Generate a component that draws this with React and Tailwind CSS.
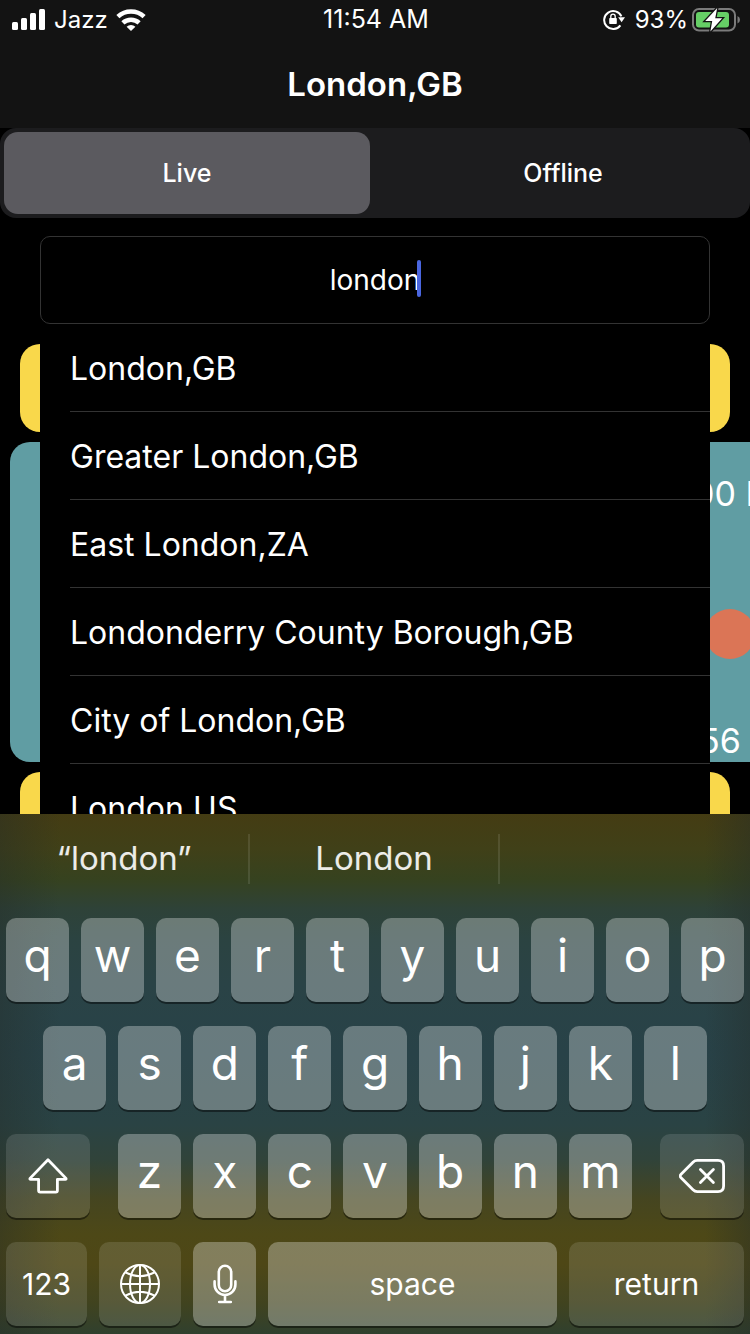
import React, { useState } from "react";

const CITIES = [
  "London,GB",
  "Greater London,GB",
  "East London,ZA",
  "Londonderry County Borough,GB",
  "City of London,GB",
  "London,US",
];

function SignalIcon() {
  return (
    <svg width="34" height="22" viewBox="0 0 34 22" fill="#fff" aria-hidden="true">
      <rect x="0" y="13" width="6" height="8" rx="1.5" />
      <rect x="9" y="9" width="6" height="12" rx="1.5" />
      <rect x="18" y="4" width="6" height="17" rx="1.5" />
      <rect x="27" y="0" width="6" height="21" rx="1.5" />
    </svg>
  );
}

function WifiIcon() {
  return (
    <svg width="30" height="22" viewBox="0 0 30 22" fill="none" stroke="#fff" strokeWidth="4.6" aria-hidden="true">
      <path d="M1.9 7.6A19.5 19.5 0 0 1 28.1 7.6" />
      <path d="M6.9 13.9A12 12 0 0 1 23.1 13.9" />
      <path d="M15 22L10.6 17.8A6.4 6.4 0 0 1 19.4 17.8Z" fill="#fff" stroke="none" />
    </svg>
  );
}

function RotationLockIcon() {
  return (
    <svg width="22" height="22" viewBox="0 0 22 22" fill="none" aria-hidden="true">
      <path d="M18.4 7.4A9 9 0 1 0 17.4 16.4" stroke="#fff" strokeWidth="2" />
      <path d="M15.2 8.2H22L18.6 13.2Z" fill="#fff" />
      <rect x="6.2" y="9" width="7.6" height="6" rx="0.8" fill="#fff" />
      <path d="M7.8 9.4V7.4A2.2 2.2 0 0 1 12.2 7.4V9.4" stroke="#fff" strokeWidth="1.3" />
    </svg>
  );
}

function BatteryIcon() {
  return (
    <svg width="48" height="24" viewBox="0 0 48 24" fill="none" aria-hidden="true">
      <rect x="1" y="1" width="42" height="21.5" rx="6" stroke="#7b7b7b" strokeWidth="2" />
      <path d="M45.5 8Q48 9 48 11.7T45.5 15.5Z" fill="#7b7b7b" />
      <rect x="4" y="4" width="33" height="15.5" rx="3" fill="#66cf66" />
      <path d="M25.2 0L13.2 13H20.2L18.4 23.6L30.2 10.2H23.2Z" fill="#fff" stroke="#131313" strokeWidth="2.6" paintOrder="stroke" />
    </svg>
  );
}

function ShiftIcon() {
  return (
    <svg width="40" height="36" viewBox="0 0 40 36" fill="none" stroke="#fff" strokeWidth="2.8" strokeLinejoin="round" aria-hidden="true">
      <path d="M20 1.8L38 20.4Q38.4 21.4 37.4 21.4H29.4V32.6Q29.4 34.2 27.8 34.2H12.2Q10.6 34.2 10.6 32.6V21.4H2.6Q1.6 21.4 2 20.4Z" />
    </svg>
  );
}

function DeleteIcon() {
  return (
    <svg width="46" height="34" viewBox="0 0 46 34" fill="none" stroke="#fff" strokeWidth="2.8" strokeLinejoin="round" strokeLinecap="round" aria-hidden="true">
      <path d="M1.8 15.6L14 3.2Q15.8 1.4 18.2 1.4H39Q44.6 1.4 44.6 7V27Q44.6 32.6 39 32.6H18.2Q15.8 32.6 14 30.8L1.8 18.4Q.6 17 1.8 15.6Z" />
      <path d="M21.4 10.4L34.4 23.6M34.4 10.4L21.4 23.6" />
    </svg>
  );
}

function GlobeIcon() {
  return (
    <svg width="40" height="40" viewBox="0 0 40 40" fill="none" stroke="#fff" strokeWidth="2" aria-hidden="true">
      <circle cx="20" cy="20" r="19" />
      <ellipse cx="20" cy="20" rx="10" ry="19" />
      <path d="M20 1V39M1 20H39M5.4 8.4Q20 16 34.6 8.4M5.4 31.6Q20 24 34.6 31.6" />
    </svg>
  );
}

function MicIcon() {
  return (
    <svg width="24" height="40" viewBox="0 0 24 40" fill="none" stroke="#fff" strokeWidth="2.6" strokeLinecap="round" aria-hidden="true">
      <rect x="5.8" y="1.8" width="12.4" height="25.4" rx="6.2" />
      <path d="M1.6 17.4V20.6A10.4 10.4 0 0 0 22.4 20.6V17.4M12 31V38M6.2 38H17.8" />
    </svg>
  );
}

const KEY = "flex h-[84px] min-w-0 items-center justify-center rounded-[10px] shadow-[0_2px_0_rgba(0,0,0,0.45)]";

function LetterKey({ letter }) {
  return (
    <button type="button" className={`${KEY} bg-white/30 pb-2.5 text-[46px] leading-none`}>
      {letter}
    </button>
  );
}

function LightKey({ label, children }) {
  return (
    <button type="button" aria-label={label} className={`${KEY} bg-white/30 text-[30px]`}>
      {children}
    </button>
  );
}

function DarkKey({ label, children }) {
  return (
    <button type="button" aria-label={label} className={`${KEY} bg-white/12 text-[30px]`}>
      {children}
    </button>
  );
}

function StatusBar() {
  return (
    <div className="grid h-10 grid-cols-3 items-center pr-2.5 pl-3 text-2xl text-white">
      <div className="flex items-center gap-2">
        <SignalIcon />
        <span>Jazz</span>
        <WifiIcon />
      </div>
      <time className="text-center text-[25px]">11:54 AM</time>
      <div className="flex items-center justify-end gap-1">
        <span className="mr-1.5"><RotationLockIcon /></span>
        <span>93%</span>
        <BatteryIcon />
      </div>
    </div>
  );
}

function Segment({ selected, onClick, children }) {
  return (
    <button
      type="button"
      aria-pressed={selected}
      onClick={onClick}
      className={`rounded-[14px] pt-0.5 text-[25px] font-medium ${selected ? "bg-[#5b5a5f]" : "bg-transparent"}`}
    >
      {children}
    </button>
  );
}

function ForecastCards() {
  return (
    <div className="flex flex-col gap-2.5 pt-5">
      <div className="mx-5 h-[88px] shrink-0 rounded-[20px] bg-[#f9d84b]" />
      <div className="ml-2.5 flex h-80 shrink-0 justify-end overflow-hidden rounded-l-[20px] bg-[#609da3]">
        <div className="flex w-[57px] flex-col pt-8 text-[34px] leading-10 whitespace-nowrap">
          <span>00 PM</span>
          <span className="mt-[95px] ml-3 size-[50px] rounded-full bg-[#db7556]" />
          <span className="mt-[62px] ml-1.5">56</span>
        </div>
      </div>
      <div className="mx-5 h-[88px] shrink-0 rounded-[20px] bg-[#f9d84b]" />
    </div>
  );
}

function Keyboard() {
  return (
    <section
      aria-label="Keyboard"
      className="relative z-20 shrink-0 bg-[linear-gradient(90deg,rgba(36,44,40,0.4)_0%,rgba(36,44,40,0)_8%,rgba(36,44,40,0)_94%,rgba(36,44,40,0.4)_100%),linear-gradient(180deg,#443c13_0px,#404018_35px,#36421f_65px,#2e4238_95px,#2b4341_125px,#2a4346_170px,#284248_240px,#2a4344_310px,#30433a_345px,#454520_385px,#4d4817_420px,#4e4716_450px,#40431f_490px,#30402e_520px)] text-white"
    >
      <div className="grid h-[104px] grid-cols-3 pt-5 pb-9 text-[33px] text-white/90">
        <button type="button" className="border-r-2 border-white/10">“london”</button>
        <button type="button" className="border-r-2 border-white/10">London</button>
        <span />
      </div>
      <div className="flex flex-col gap-6 px-1.5 pb-2">
        <div className="grid grid-cols-10 gap-3">
          {[..."qwertyuiop"].map((l) => <LetterKey key={l} letter={l} />)}
        </div>
        <div className="grid grid-cols-9 gap-3 px-[37px]">
          {[..."asdfghjkl"].map((l) => <LetterKey key={l} letter={l} />)}
        </div>
        <div className="grid grid-cols-[84fr_514fr_84fr] gap-7">
          <DarkKey label="Shift"><ShiftIcon /></DarkKey>
          <div className="grid grid-cols-7 gap-3">
            {[..."zxcvbnm"].map((l) => <LetterKey key={l} letter={l} />)}
          </div>
          <DarkKey label="Delete"><DeleteIcon /></DarkKey>
        </div>
        <div className="grid grid-cols-[81fr_82fr_63fr_289fr_175fr] gap-3">
          <DarkKey>123</DarkKey>
          <DarkKey label="Next keyboard"><GlobeIcon /></DarkKey>
          <LightKey label="Dictate"><MicIcon /></LightKey>
          <LightKey>space</LightKey>
          <DarkKey>return</DarkKey>
        </div>
      </div>
    </section>
  );
}

export default function App() {
  const [mode, setMode] = useState("Live");
  const [query, setQuery] = useState("london");
  return (
    <div className="flex h-screen flex-col overflow-hidden bg-black font-['Inter',sans-serif] text-white">
      <header className="shrink-0 bg-[#131313]">
        <StatusBar />
        <h1 className="flex h-[88px] items-center justify-center pt-0.5 text-[33px] font-semibold">London,GB</h1>
      </header>
      <main className="min-h-0 flex-1 overflow-hidden">
        <div className="grid h-[90px] grid-cols-2 gap-2.5 rounded-2xl bg-[#1c1c1e] p-1">
          <Segment selected={mode === "Live"} onClick={() => setMode("Live")}>Live</Segment>
          <Segment selected={mode === "Offline"} onClick={() => setMode("Offline")}>Offline</Segment>
        </div>
        <div className="relative mx-10 mt-[18px]">
          <input
            type="text"
            aria-label="City"
            value={query}
            onChange={(e) => setQuery(e.target.value)}
            className="block h-[88px] w-full rounded-[10px] border border-[#333] bg-black text-center text-[28px] caret-[#4a66e0] outline-none"
          />
          <span className="pointer-events-none absolute top-6 left-1/2 ml-[42px] h-[37px] w-1 rounded-sm bg-[#4a66e0]" />
        </div>
        <div className="relative">
          <ForecastCards />
          <ul className="absolute inset-x-10 top-0 z-10 bg-black pl-[30px]">
            {CITIES.map((city) => (
              <li key={city} className="border-b border-[#333]">
                <button type="button" className="block h-[87px] w-full pt-0.5 text-left text-[32px]">{city}</button>
              </li>
            ))}
          </ul>
        </div>
      </main>
      <Keyboard />
    </div>
  );
}
